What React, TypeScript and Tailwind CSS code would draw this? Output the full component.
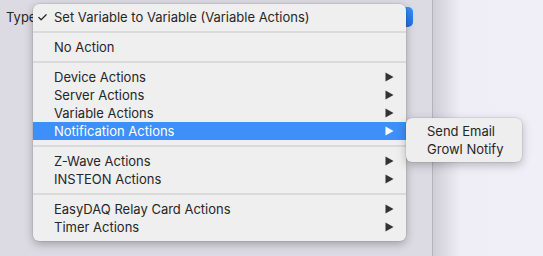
import { Check } from 'lucide-react';

type Item = { label: string; checked?: boolean; sub?: boolean; active?: boolean } | 'sep';

const items: Item[] = [
  { label: 'Set Variable to Variable (Variable Actions)', checked: true },
  'sep',
  { label: 'No Action' },
  'sep',
  { label: 'Device Actions', sub: true },
  { label: 'Server Actions', sub: true },
  { label: 'Variable Actions', sub: true },
  { label: 'Notification Actions', sub: true, active: true },
  'sep',
  { label: 'Z-Wave Actions', sub: true },
  { label: 'INSTEON Actions', sub: true },
  'sep',
  { label: 'EasyDAQ Relay Card Actions', sub: true },
  { label: 'Timer Actions', sub: true },
];

function Arrow({ white }: { white?: boolean }) {
  return (
    <svg width="9" height="10" viewBox="0 0 9 10" className="shrink-0">
      <path d="M0.5 0.5 L8.5 5 L0.5 9.5 Z" fill={white ? '#ffffff' : '#333333'} />
    </svg>
  );
}

export default function App() {
  return (
    <div
      className="relative w-[543px] h-[256px] overflow-hidden flex text-[13px] text-[#262626]"
      style={{ fontFamily: 'Inter, "Helvetica Neue", Arial, sans-serif' }}
    >
      <div className="relative w-[432px] h-full bg-[#dcdbe3]">
        <div className="pl-[6px] pt-[8px] leading-[18px]">Type</div>
        <div className="absolute left-[330px] top-[7px] w-[83px] h-[20px] rounded-[5px] bg-gradient-to-b from-[#3d8ef8] to-[#1f6fe6]" />
      </div>
      <div className="w-[1px] h-full bg-[#b4b3bb]" />
      <div className="flex-1 h-full bg-gradient-to-r from-[#cfced6] via-[#efeef6] via-25% to-[#f0eff7]" />

      <div className="absolute left-[33px] top-[4px] w-[373px] rounded-[6px] bg-[#efefef] pt-[4px] pb-[5px] shadow-[0_3px_10px_rgba(0,0,0,0.28),0_0_0_0.5px_rgba(0,0,0,0.12)]">
        {items.map((it, i) =>
          it === 'sep' ? (
            <div key={i} className="h-[12px] flex items-center">
              <div className="w-full h-[2px] bg-[#dadada]" />
            </div>
          ) : (
            <div
              key={i}
              className={`relative h-[18px] flex items-center pl-[21px] pr-[12px] leading-[18px] ${
                it.active ? 'bg-[#3e8ff7] text-white' : ''
              }`}
            >
              {it.checked && (
                <Check className="absolute left-[4px] top-[4px] w-[11px] h-[11px]" strokeWidth={2.6} />
              )}
              <span className="flex-1">{it.label}</span>
              {it.sub && <Arrow white={it.active} />}
            </div>
          )
        )}
      </div>

      <div className="absolute left-[406px] top-[118px] w-[116px] rounded-[6px] bg-[#eeeeee] pt-[4px] pb-[4px] shadow-[0_3px_10px_rgba(0,0,0,0.25),0_0_0_0.5px_rgba(0,0,0,0.12)]">
        <div className="h-[18px] leading-[18px] pl-[21px]">Send Email</div>
        <div className="h-[18px] leading-[18px] pl-[21px]">Growl Notify</div>
      </div>
    </div>
  );
}
